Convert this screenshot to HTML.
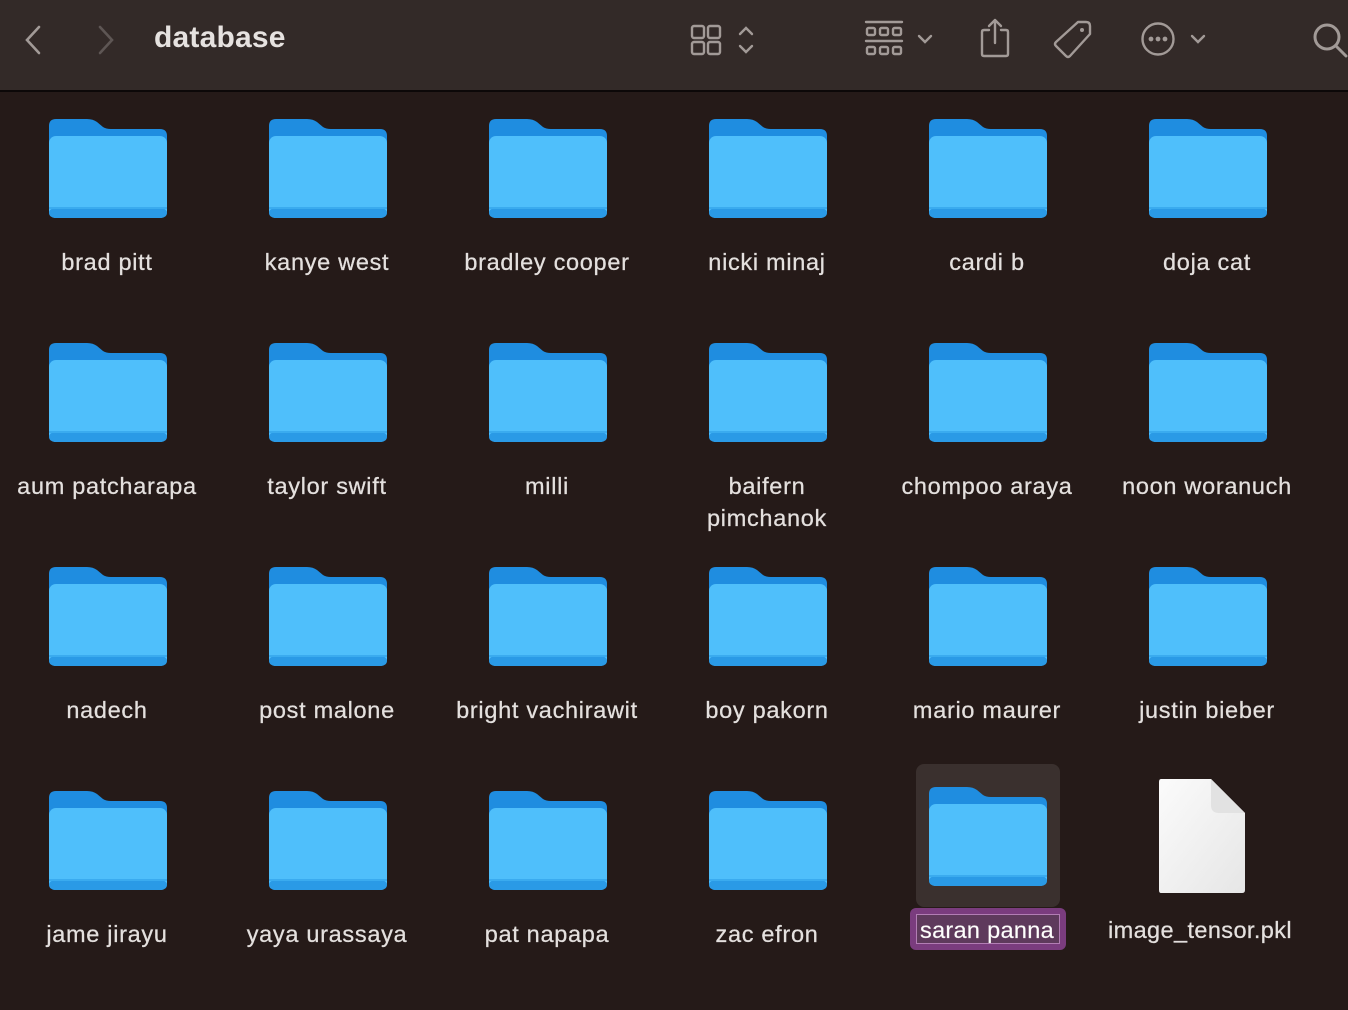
<!DOCTYPE html>
<html><head><meta charset="utf-8"><style>
*{margin:0;padding:0;box-sizing:border-box}
body{width:1348px;height:1010px;background:#251a18;font-family:"Liberation Sans",sans-serif;position:relative;overflow:hidden}
.tb{position:absolute;left:0;top:0;width:1348px;height:92px;background:#332a28;border-bottom:2px solid #0c0808}
.title{position:absolute;left:154px;top:21px;font-size:30px;font-weight:bold;color:#e6e2e0;letter-spacing:0.2px}
.ic{position:absolute}
.f{position:absolute;width:118px;height:100px}
.l{position:absolute;width:220px;text-align:center;font-size:23.5px;color:#e4e0de;line-height:32px;letter-spacing:0.7px;-webkit-text-stroke:0.25px #e4e0de}
</style></head><body>
<svg width="0" height="0" style="position:absolute"><defs>
<symbol id="fd" viewBox="0 0 118 100">
<path d="M7 0H38Q44 0 48 3L54 8Q57 10 62 10H111Q118 10 118 17V90H0V7Q0 0 7 0Z" fill="#1f8de0"/>
<rect x="0" y="17" width="118" height="82" rx="7" fill="#4fbffb"/>
<rect x="0" y="89" width="118" height="10" rx="6" fill="#2a9ae6"/>
<rect x="0" y="88" width="118" height="2" fill="#3aabef"/>
</symbol></defs></svg>
<div class="tb">
<svg class="ic" style="left:22px;top:24px" width="24" height="32"><path d="M17 3L5 16L17 29" stroke="#a29a97" stroke-width="2.6" fill="none" stroke-linecap="round"/></svg>
<svg class="ic" style="left:94px;top:24px" width="24" height="32"><path d="M6 3L18 16L6 29" stroke="#5e5654" stroke-width="2.6" fill="none" stroke-linecap="round"/></svg>
<div class="title">database</div>
<svg class="ic" style="left:688px;top:22px" width="70" height="36" fill="none" stroke="#a29a97" stroke-width="2.4" stroke-linecap="round">
<rect x="4" y="4" width="12" height="12" rx="2"/><rect x="20" y="4" width="12" height="12" rx="2"/><rect x="4" y="20" width="12" height="12" rx="2"/><rect x="20" y="20" width="12" height="12" rx="2"/>
<path d="M52 12L58 6L64 12M52 24L58 30L64 24"/></svg>
<svg class="ic" style="left:862px;top:18px" width="80" height="40" fill="none" stroke="#a29a97" stroke-width="2.4" stroke-linecap="round">
<path d="M4 4H40M4 23H40"/><rect x="5" y="10" width="8" height="7" rx="1.5"/><rect x="18" y="10" width="8" height="7" rx="1.5"/><rect x="31" y="10" width="8" height="7" rx="1.5"/>
<rect x="5" y="29" width="8" height="7" rx="1.5"/><rect x="18" y="29" width="8" height="7" rx="1.5"/><rect x="31" y="29" width="8" height="7" rx="1.5"/>
<path d="M57 18L63 24L69 18"/></svg>
<svg class="ic" style="left:976px;top:16px" width="40" height="44" fill="none" stroke="#a29a97" stroke-width="2.4" stroke-linecap="round" stroke-linejoin="round">
<path d="M13 14H8Q6 14 6 16V38Q6 40 8 40H30Q32 40 32 38V16Q32 14 30 14H25M19 27V4M13 10L19 4L25 10"/></svg>
<svg class="ic" style="left:1050px;top:16px" width="46" height="46" fill="none" stroke="#a29a97" stroke-width="2.4" stroke-linejoin="round">
<path d="M28 6H36Q40 6 40 10V18L20 40Q18 42 16 40L6 30Q4 28 6 26Z"/><circle cx="32" cy="14" r="2" fill="#a29a97" stroke="none"/></svg>
<svg class="ic" style="left:1136px;top:18px" width="76" height="42" fill="none" stroke="#a29a97" stroke-width="2.4" stroke-linecap="round">
<circle cx="22" cy="21" r="15.5"/><circle cx="15" cy="21" r="1.2" fill="#a29a97"/><circle cx="22" cy="21" r="1.2" fill="#a29a97"/><circle cx="29" cy="21" r="1.2" fill="#a29a97"/>
<path d="M56 18L62 24L68 18"/></svg>
<svg class="ic" style="left:1308px;top:18px" width="40" height="42" fill="none" stroke="#a29a97" stroke-width="3" stroke-linecap="round">
<circle cx="19" cy="19" r="12"/><path d="M28 28L38 38"/></svg>
</div>

<div style="position:absolute;left:916px;top:764px;width:144px;height:143px;background:#3a302e;border-radius:8px"></div>
<div style="position:absolute;left:910px;top:908px;width:156px;height:42px;background:#7a3c7e;border-radius:6px"></div>
<div style="position:absolute;left:916px;top:914px;width:144px;height:30px;border:1px solid #b27db4;background:#5e3a5c"></div>

<svg class="f" style="left:49px;top:119px"><use href="#fd"/></svg>
<svg class="f" style="left:269px;top:119px"><use href="#fd"/></svg>
<svg class="f" style="left:489px;top:119px"><use href="#fd"/></svg>
<svg class="f" style="left:709px;top:119px"><use href="#fd"/></svg>
<svg class="f" style="left:929px;top:119px"><use href="#fd"/></svg>
<svg class="f" style="left:1149px;top:119px"><use href="#fd"/></svg>
<svg class="f" style="left:49px;top:343px"><use href="#fd"/></svg>
<svg class="f" style="left:269px;top:343px"><use href="#fd"/></svg>
<svg class="f" style="left:489px;top:343px"><use href="#fd"/></svg>
<svg class="f" style="left:709px;top:343px"><use href="#fd"/></svg>
<svg class="f" style="left:929px;top:343px"><use href="#fd"/></svg>
<svg class="f" style="left:1149px;top:343px"><use href="#fd"/></svg>
<svg class="f" style="left:49px;top:567px"><use href="#fd"/></svg>
<svg class="f" style="left:269px;top:567px"><use href="#fd"/></svg>
<svg class="f" style="left:489px;top:567px"><use href="#fd"/></svg>
<svg class="f" style="left:709px;top:567px"><use href="#fd"/></svg>
<svg class="f" style="left:929px;top:567px"><use href="#fd"/></svg>
<svg class="f" style="left:1149px;top:567px"><use href="#fd"/></svg>
<svg class="f" style="left:49px;top:791px"><use href="#fd"/></svg>
<svg class="f" style="left:269px;top:791px"><use href="#fd"/></svg>
<svg class="f" style="left:489px;top:791px"><use href="#fd"/></svg>
<svg class="f" style="left:709px;top:791px"><use href="#fd"/></svg>
<svg class="f" style="left:929px;top:787px"><use href="#fd"/></svg>
<svg class="ic" style="left:1158px;top:778px" width="88" height="116">
<defs><linearGradient id="pg" x1="0" y1="0" x2="1" y2="1"><stop offset="0" stop-color="#fbfbfb"/><stop offset="1" stop-color="#e6e6e6"/></linearGradient></defs>
<path d="M3 1H53L87 35V112Q87 115 84 115H3Q1 115 1 112V4Q1 1 3 1Z" fill="url(#pg)"/>
<path d="M53 1V27Q53 35 61 35H87Z" fill="#e2e2e2"/></svg>

<div class="l" style="left:-3px;top:246px">brad pitt</div>
<div class="l" style="left:217px;top:246px">kanye west</div>
<div class="l" style="left:437px;top:246px">bradley cooper</div>
<div class="l" style="left:657px;top:246px">nicki minaj</div>
<div class="l" style="left:877px;top:246px">cardi b</div>
<div class="l" style="left:1097px;top:246px">doja cat</div>
<div class="l" style="left:-3px;top:470px">aum patcharapa</div>
<div class="l" style="left:217px;top:470px">taylor swift</div>
<div class="l" style="left:437px;top:470px">milli</div>
<div class="l" style="left:657px;top:470px">baifern<br>pimchanok</div>
<div class="l" style="left:877px;top:470px">chompoo araya</div>
<div class="l" style="left:1097px;top:470px">noon woranuch</div>
<div class="l" style="left:-3px;top:694px">nadech</div>
<div class="l" style="left:217px;top:694px">post malone</div>
<div class="l" style="left:437px;top:694px">bright vachirawit</div>
<div class="l" style="left:657px;top:694px">boy pakorn</div>
<div class="l" style="left:877px;top:694px">mario maurer</div>
<div class="l" style="left:1097px;top:694px">justin bieber</div>
<div class="l" style="left:-3px;top:918px">jame jirayu</div>
<div class="l" style="left:217px;top:918px">yaya urassaya</div>
<div class="l" style="left:437px;top:918px">pat napapa</div>
<div class="l" style="left:657px;top:918px">zac efron</div>
<div class="l" style="left:877px;top:914px;color:#fff;letter-spacing:0.3px">saran panna</div>
<div class="l" style="left:1090px;top:914px;letter-spacing:0.4px">image_tensor.pkl</div>
</body></html>
